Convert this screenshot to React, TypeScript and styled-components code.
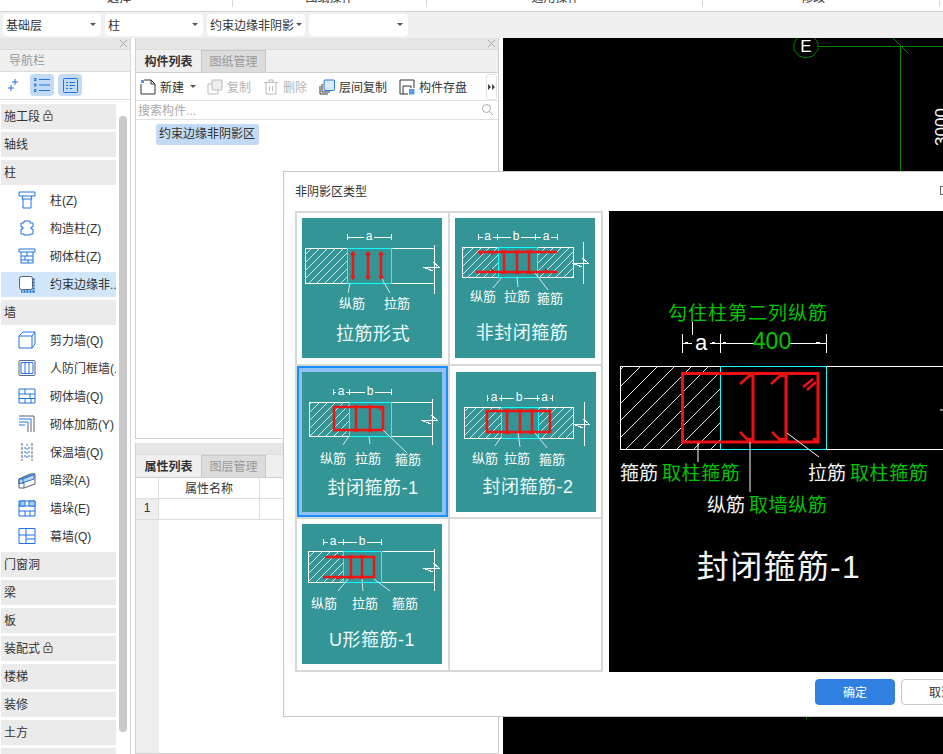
import React from "react";
import styled, { createGlobalStyle } from "styled-components";

const Global = createGlobalStyle`
  html, body { margin: 0; padding: 0; background: #fff; overflow: hidden; }
  body { font-family: "Liberation Sans", "Noto Sans CJK SC", sans-serif; font-size: 12px; color: #333; }
  * { box-sizing: border-box; }
`;

const Page = styled.div`
  position: relative; width: 943px; height: 754px; overflow: hidden;
  display: flex; flex-direction: column; background: #fff;
`;

/* ---------- top ribbon ---------- */
const Ribbon = styled.div`
  height: 12px; flex: none; display: flex; overflow: hidden; background: #fff;
  border-bottom: 1px solid #d4d4d4;
`;
const RibbonGroup = styled.div<{ $w: number; $pl?: number; $pr?: number }>`
  width: ${p => p.$w}px; flex: none; height: 7px; border-right: 1px solid #d8d8d8;
  text-align: center; line-height: 14px; color: #333;
  padding: 0 ${p => p.$pr ?? 0}px 0 ${p => p.$pl ?? 0}px;
  & > span { display: block; margin-top: -9px; }
`;

const SelectBar = styled.div`
  height: 26px; flex: none; background: #f0f0f0; display: flex; align-items: center;
  gap: 4px; padding: 0 0 0 3px;
`;
const Select = styled.div<{ $w: number }>`
  width: ${p => p.$w}px; height: 22px; background: #fff; border-radius: 4px; padding: 0 3px 2px 3px;
  display: flex; align-items: center; justify-content: space-between; white-space: nowrap; color: #333;
`;
const Caret = styled.i`
  flex: none; width: 0; height: 0; border-left: 3px solid transparent; border-right: 3px solid transparent;
  border-top: 3px solid #555; margin: 0 2px;
`;

/* ---------- main ---------- */
const Main = styled.div`flex: 1; display: flex; min-height: 0;`;
const DockHeader = styled.div`
  height: 12px; background: #e6e6e6; border-bottom: 1px solid #dcdcdc; display: flex;
  justify-content: flex-end; align-items: center; padding-right: 3px; flex: none;
`;
const NavPanel = styled.aside`
  position: relative; width: 131px; flex: none; border-right: 1px solid #d8d8d8; display: flex; flex-direction: column; overflow: hidden;
`;
const NavTitle = styled.div`
  height: 22px; flex: none; background: #f0f0f0; border-bottom: 1px solid #dcdcdc; color: #999; padding-left: 9px; line-height: 23px;
`;
const NavTools = styled.div`
  height: 28px; flex: none; border-bottom: 1px solid #dcdcdc; display: flex; align-items: center; padding: 0 0 1px 8px;
  gap: 4px;
`;
const NavSpark = styled.svg`width: 11px; height: 12px; margin-right: 7px; fill: none; stroke: #1e73e0; stroke-width: 1;`;
const NavToolBtn = styled.div`
  width: 24px; height: 22px; background: #c2daf3; border-radius: 4px; display: flex; align-items: center; justify-content: center;
`;
const NavList = styled.div`
  display: flex; flex-direction: column; gap: 3px; padding: 4px 0 0 1px; width: 116px; flex: none;
`;
const Section = styled.div`
  height: 25px; flex: none; background: #ebebeb; padding: 0 0 2px 3px; display: flex; align-items: center; gap: 3px; color: #333;
`;
const Row = styled.div<{ $active?: boolean }>`
  height: 25px; flex: none; display: flex; align-items: center; padding: 0 0 2px 17px; gap: 14px; white-space: nowrap; overflow: hidden;
  background: ${p => (p.$active ? "#d2e6fb" : "transparent")}; color: #333;
`;
const RowIcon = styled.svg`
  width: 18px; height: 18px; flex: none; fill: none; stroke: #1e73e0; stroke-width: 1;
`;
const Thumb = styled.div`
  position: absolute; left: 119px; top: 78px; width: 8px; height: 616px; border-radius: 4px; background: #c9c9c9;
`;

const Middle = styled.div`
  width: 364px; flex: none; margin-left: 4px; display: flex; flex-direction: column; gap: 4px;
`;
const Dock = styled.section<{ $h?: number }>`
  border: solid #d0d0d0; border-width: 0 1px 1px; display: flex; flex-direction: column; overflow: hidden;
  ${p => (p.$h ? `height: ${p.$h}px; flex: none;` : "flex: 1; min-height: 0;")}
`;
const Tabs = styled.div`
  height: 23px; flex: none; background: #f0f0f0; display: flex; border-bottom: 1px solid #d0d0d0;
`;
const Tab = styled.div<{ $on?: boolean }>`
  width: 65px; height: 22px; display: flex; align-items: center; justify-content: center; padding-bottom: 2px;
  background: ${p => (p.$on ? "#f0f0f0" : "#dcdcdc")}; color: ${p => (p.$on ? "#333" : "#999")};
  font-weight: ${p => (p.$on ? 700 : 400)};
  ${p => (p.$on ? "" : "border: 1px solid #c8c8c8; border-bottom: 0;")}
`;
const Tools = styled.div`
  height: 28px; flex: none; display: flex; align-items: center; gap: 12px; padding: 0 0 0 4px; border-bottom: 1px solid #e0e0e0;
`;
const Tool = styled.div<{ $off?: boolean; $tight?: boolean }>`
  display: flex; align-items: center; gap: 4px; white-space: nowrap; color: ${p => (p.$off ? "#b4b4b4" : "#333")};
  ${p => (p.$tight ? "margin-right: -3px;" : "")}
`;
const ToolIcon = styled.svg`width: 16px; height: 16px; flex: none; fill: none; stroke-width: 1;`;
const More = styled.div`
  margin-left: auto; margin-right: 1px; width: 11px; height: 26px; background: #fff; border: 1px solid #e4e4e4; border-radius: 3px;
  display: flex; align-items: center; justify-content: center;
`;
const Search = styled.div`
  height: 19px; flex: none; display: flex; align-items: center; justify-content: space-between; padding: 0 5px 2px 2px; color: #aaa;
  border-bottom: 1px solid #e0e0e0;
`;
const ListBody = styled.div`flex: 1; padding: 4px 0 0 20px;`;
const Picked = styled.div`
  width: 103px; height: 21px; background: #c2daf3; border-radius: 3px; padding-left: 3px; line-height: 21px; white-space: nowrap; color: #333;
`;
const PropHead = styled.div`
  height: 21px; flex: none; display: grid; grid-template-columns: 23px 101px 1fr; border-bottom: 1px solid #ddd;
`;
const PropCell = styled.div<{ $num?: boolean }>`
  display: flex; align-items: center; justify-content: center; padding-bottom: 2px; border-right: 1px solid #ddd; background: ${p => (p.$num ? "#eee" : "#fff")};
`;
const PropFill = styled.div`flex: 1; width: 23px; background: #eee;`;

const Canvas = styled.div`
  width: 440px; flex: none; margin-left: 4px; background: #000; overflow: hidden;
`;
const CanvasArt = styled.svg`display: block; width: 440px; height: 716px;`;

/* ---------- dialog ---------- */
const Dialog = styled.div`
  position: absolute; left: 283px; top: 171px; width: 710px; height: 546px; background: #fff; border: 1px solid #c8c8c8;
  display: flex; flex-direction: column;
`;
const DialogHead = styled.div`
  height: 39px; flex: none; display: flex; align-items: center; justify-content: space-between; padding: 0 44px 2px 11px; color: #333;
`;
const Maximize = styled.i`width: 8px; height: 9px; border: 1px solid #666; display: block;`;
const DialogBody = styled.div`
  height: 461px; flex: none; display: flex; gap: 6px; padding-left: 11px;
`;
const Gallery = styled.div`
  width: 308px; flex: none; border: 2px solid #d8d8d8; background: #d8d8d8; display: grid;
  grid-template-columns: 151px 151px; grid-template-rows: repeat(3, 151px); gap: 2px;
`;
const Cell = styled.div<{ $on?: boolean; $top: number; $left: number }>`
  background: #fff; display: flex; align-items: flex-start; padding: ${p => p.$top}px 0 0 ${p => p.$left}px;
  ${p => (p.$on ? "box-shadow: inset 0 0 0 2px #1890ff, inset 0 0 0 6px #8fc1f6;" : "")}
`;
const CardArt = styled.svg`display: block; width: 140px; height: 140px; background: #339595; flex: none;`;
const CardLabel = styled.text`font-size: 13px; fill: #fff; text-anchor: middle; dominant-baseline: central;`;
const CardTitle = styled.text`font-size: 18px; fill: #eefafa; text-anchor: middle; dominant-baseline: central; letter-spacing: 0.5px;`;
const DimText = styled.text`font-size: 12px; fill: #fff; text-anchor: middle; dominant-baseline: central;`;
const Preview = styled.svg`display: block; width: 372px; height: 461px; background: #000; flex: none;`;
const PreText = styled.text<{ $size: number; $c: string; $mid?: boolean; $sp?: number }>`
  font-size: ${p => p.$size}px; fill: ${p => p.$c}; dominant-baseline: central;
  text-anchor: ${p => (p.$mid ? "middle" : "start")}; letter-spacing: ${p => p.$sp ?? 0}px;
`;
const DialogFoot = styled.div`
  flex: 1; display: flex; justify-content: flex-end; align-items: flex-start; gap: 6px; padding: 7px 11px 0 0;
`;
const Btn = styled.button<{ $primary?: boolean }>`
  width: 80px; height: 26px; border-radius: 4px; font: inherit; cursor: pointer; padding: 0 0 2px;
  background: ${p => (p.$primary ? "#2f80e0" : "#fff")}; color: ${p => (p.$primary ? "#fff" : "#333")};
  border: 1px solid ${p => (p.$primary ? "#2f80e0" : "#c8c8c8")};
`;
const Lock = styled.svg`width: 10px; height: 11px; fill: none; stroke: #555; stroke-width: 1; flex: none;`;

const CloseX = () => (
  <svg width="7" height="7" viewBox="0 0 7 7" fill="none" stroke="#aaa"><path d="M0 0l7 7M7 0L0 7" /></svg>
);
const LockIcon = () => (
  <Lock viewBox="0 0 10 11"><path d="M1 4.500h8v6H1zM3 4.500V2.500a2 2 0 0 1 4 0v2" /><circle cx="5" cy="7.500" r=".8" /></Lock>
);

/* ---------- sidebar icons ---------- */
const D = "#5a6472";
const icons: Record<string, React.ReactNode> = {
  col: <><path d="M1 1h16v4H1zM5 5l-1 3h10l-1-3M5 8v9h8V8" /></>,
  gz: <><path d="M6 2h6v2h3v4h-2v2h2v5h-3v1H6v-1H3v-5h2V8H3V4h3z" /></>,
  qt: <><path d="M1 2h16v3H1zM3 5v11h12V5M3 9h12M3 13h12M9 5v4M7 9v4M10 13v3" /></>,
  ys: <><path d="M15.500 3.500V16.500H3" strokeWidth="2.500" strokeDasharray="2 1" /><rect x="1.500" y="1.500" width="13" height="13" rx="2" fill="#fff" stroke={D} /></>,
  jl: <><path d="M1 5h13v12H1zM1 5l4-4h12v12l-3 4M14 5l3-4" /></>,
  rf: <><rect x="1" y="1.500" width="16" height="15" rx="1" stroke={D} /><path d="M3 3.500h12v11H3zM7 3.500v11M11 3.500v11" /></>,
  qq: <><path d="M1 2h16v14H1zM1 7h16M1 11.500h16M7 2v5M12 7v4.500M7 11.500V16M13 11.500V16" /></>,
  jj: <><path d="M1 4h12v3M1 7h9v3M1 10h6" /><path d="M1 1h15v16M13 7v10M10 10v7" stroke={D} /></>,
  bw: <><path d="M4 0v18M14 0v18" stroke={D} strokeDasharray="3 1" /><path d="M9 1v16M6 5h6M6 9h6M6 13h6" strokeDasharray="2 2" /></>,
  al: <><path d="M1 8l15-5v5L1 13z" fill="#bcd7f6" /><path d="M1 8v9h5l11-4V3l-5 0-11 5M6 17v-5" stroke={D} /><path d="M1 8l4 0 12-5M5 8v5" /></>,
  qd: <><path d="M1 2h16v15H1zM1 7h16M1 12h16M7 12v5M12 12v5" /><path d="M2 2h5v5H2zM11 2h6v5h-6z" fill="#a6ccf7" /></>,
  mq: <><path d="M1 1.500h16v15H1zM1 8h16M8 1.500V16.500M8 12h9" /></>,
};
const NavIcon = ({ k }: { k: string }) => <RowIcon viewBox="0 0 18 18">{icons[k]}</RowIcon>;

/* ---------- gallery cards ---------- */
type CardData = {
  id: string; title: [string, number, number];
  dimY: number; dims: [string, number, number][];
  x1: number; y1: number; y2: number; end: number; closed?: boolean;
  hatch: [number, number][]; cyan: [number, number];
  vx: number; vy: [number, number]; bars: string; hooks: string; leaders: string;
  labels: [string, number, number][];
};

const cards: (CardData | null)[] = [
  {
    id: "c1", title: ["拉筋形式", 71, 116], dimY: 19, dims: [["a", 45, 89]],
    x1: 3, y1: 30, y2: 65, end: 132, hatch: [[3, 45]], cyan: [45, 89], vx: 132, vy: [27, 76],
    bars: "M51 36V59M66 36V59M79 36V59",
    hooks: "M49 37l2-3 2 3M64 37l2-3 2 3M77 37l2-3 2 3M49 58l2 3 2-3M64 58l2 3 2-3M77 58l2 3 2-3",
    leaders: "M48 65L46 75M80 61L88 75",
    labels: [["纵筋", 50, 85], ["拉筋", 95, 85]],
  },
  {
    id: "c2", title: ["非封闭箍筋", 67, 115], dimY: 19, dims: [["a", 23, 42], ["b", 42, 80], ["a", 80, 102]],
    x1: 7, y1: 29, y2: 59, end: 118, closed: true, hatch: [[7, 43], [82, 118]], cyan: [43, 82], vx: 128, vy: [24, 66],
    bars: "M23 34H102M21 54H102M49 34V54M62 34V54M74 34V54",
    hooks: "M25 37l3-3M36 37l3-3M47 32l2 2 2-2M60 32l2 2 2-2M72 32l2 2 2-2M47 56l2-2 2 2M60 56l2-2 2 2M72 56l2-2 2 2M36 51l3 3M90 51l3 3",
    leaders: "M47 59L38 70M62 59L63 69M80 55L93 72",
    labels: [["纵筋", 28, 78], ["拉筋", 62, 78], ["箍筋", 95, 80]],
  },
  {
    id: "c3", title: ["封闭箍筋-1", 71, 116], dimY: 20, dims: [["a", 31, 47], ["b", 47, 89]],
    x1: 7, y1: 30, y2: 64, end: 130, hatch: [[7, 47]], cyan: [47, 89], vx: 130, vy: [27, 73],
    bars: "M32 35H81V58H32ZM54 35V58M68 35V58",
    hooks: "M52 33l2 2 2-2M66 33l2 2 2-2M52 60l2-2 2 2M66 60l2-2 2 2M76 35l3 3",
    leaders: "M47 64L41 73M67 64L68 72M81 58L105 81",
    labels: [["纵筋", 31, 86], ["拉筋", 66, 86], ["箍筋", 106, 87]],
  },
  {
    id: "c4", title: ["封闭箍筋-2", 72, 115], dimY: 26, dims: [["a", 31, 45], ["b", 45, 81], ["a", 81, 96]],
    x1: 8, y1: 35, y2: 66, end: 117, closed: true, hatch: [[8, 45], [82, 117]], cyan: [45, 82], vx: 128, vy: [30, 74],
    bars: "M31 39H94V60H31ZM51 39V60M64 39V60M76 39V60",
    hooks: "M49 37l2 2 2-2M62 37l2 2 2-2M74 37l2 2 2-2M49 62l2-2 2 2M62 62l2-2 2 2M74 62l2-2 2 2",
    leaders: "M45 65L39 74M62 61L64 75M79 61L91 76",
    labels: [["纵筋", 29, 86], ["拉筋", 61, 86], ["箍筋", 96, 87]],
  },
  {
    id: "c5", title: ["U形箍筋-1", 70, 116], dimY: 18, dims: [["a", 21, 41], ["b", 41, 79]],
    x1: 6, y1: 27, y2: 58, end: 132, hatch: [[6, 41]], cyan: [41, 79], vx: 132, vy: [25, 67],
    bars: "M23 33H72V53H21M49 33V53M60 33V53",
    hooks: "M47 31l2 2 2-2M58 31l2 2 2-2M47 55l2-2 2 2M58 55l2-2 2 2M34 31l2 2 2-2M34 55l2-2 2 2",
    leaders: "M46 55L36 67M60 55L61 67M72 55L88 67",
    labels: [["纵筋", 22, 79], ["拉筋", 63, 79], ["箍筋", 103, 79]],
  },
  null,
];

const Card = ({ c }: { c: CardData }) => {
  const my = Math.round((c.y1 + c.y2) / 2);
  return (
    <CardArt viewBox="0 0 140 140">
      <defs>
        <pattern id={c.id} width="8" height="8" patternUnits="userSpaceOnUse">
          <path d="M-1 9L9-1" stroke="#fff" strokeWidth="0.8" />
        </pattern>
      </defs>
      {c.hatch.map(([a, b]) => (
        <rect key={a} x={a} y={c.y1} width={b - a} height={c.y2 - c.y1} fill={`url(#${c.id})`} />
      ))}
      <path
        d={`M${c.end} ${c.y1}H${c.x1}V${c.y2}H${c.end}${c.closed ? "Z" : ""}M${c.vx} ${c.vy[0]}V${c.vy[1]}M${c.vx - 11} ${my + 1}H${c.vx + 5}L${c.vx - 1} ${my - 4}M${c.vx - 1} ${my + 5}L${c.vx - 11} ${my + 1}`}
        fill="none" stroke="#fff" strokeWidth="1" shapeRendering="crispEdges"
      />
      <rect x={c.cyan[0]} y={c.y1} width={c.cyan[1] - c.cyan[0]} height={c.y2 - c.y1} fill="none" stroke="#1ff" strokeWidth="1" shapeRendering="crispEdges" />
      <path d={c.bars} fill="none" stroke="#f01414" strokeWidth="2.500" />
      <path d={c.hooks} fill="none" stroke="#f01414" strokeWidth="1.500" />
      <path d={c.leaders} fill="none" stroke="#fff" strokeWidth="0.8" />
      {c.dims.map(([t, a, b], i) => {
        const m = (a + b) / 2;
        return (
          <g key={i}>
            <path d={`M${a} ${c.dimY - 3}V${c.dimY + 3}M${b} ${c.dimY - 3}V${c.dimY + 3}M${a} ${c.dimY}H${m - 5}M${m + 5} ${c.dimY}H${b}`} stroke="#fff" strokeWidth="1" fill="none" shapeRendering="crispEdges" />
            <DimText x={m} y={c.dimY - 1}>{t}</DimText>
          </g>
        );
      })}
      {c.labels.map(([t, x, y]) => <CardLabel key={t} x={x} y={y}>{t}</CardLabel>)}
      <CardTitle x={c.title[1]} y={c.title[2]}>{c.title[0]}</CardTitle>
    </CardArt>
  );
};

const GREEN = "#00c400";
const WHITE = "#f4f4f4";
const PreviewArt = () => (
  <Preview viewBox="0 0 372 461">
    <defs>
      <pattern id="ph" width="17" height="17" patternUnits="userSpaceOnUse">
        <path d="M-1 18L18-1" stroke="#fff" strokeWidth="0.9" />
      </pattern>
    </defs>
    <PreText x={139} y={102} $size={19} $sp={1} $c={GREEN} $mid>勾住柱第二列纵筋</PreText>
    <path d="M83 111V124M73 123V142M111 123V142M217 123V142M73 132H83M101 132H111M111 132H146M181 132H217" stroke="#fff" strokeWidth="1" fill="none" shapeRendering="crispEdges" />
    <path d="M76 131h3v2h-3zM103 131h3v2h-3zM114 131h3v2h-3zM207 131h4v2h-4z" fill="#fff" />
    <PreText x={92} y={131} $size={22} $c="#fff" $mid>a</PreText>
    <PreText x={163} y={130} $size={23} $c={GREEN} $mid>400</PreText>
    <rect x={11} y={155} width={100} height={83} fill="url(#ph)" />
    <path d="M372 155H11V238H372" fill="none" stroke="#fff" strokeWidth="1" shapeRendering="crispEdges" />
    <rect x={111} y={155} width={106} height={83} fill="none" stroke="#1ff" strokeWidth="1" shapeRendering="crispEdges" />
    <path d="M73.500 162.500H209V231H73.500ZM144 162V231M177 162V231" fill="none" stroke="#f01010" strokeWidth="3" />
    <path d="M131 173l10-9M162 173l10-9M194 176l10-8M198 179l9-8M131 221l9 9M163 221l9 9M204 228l3 2" fill="none" stroke="#f01010" strokeWidth="2.500" />
    <path d="M140 161h5v5h-5zM172 161h5v5h-5zM139 227h6v5h-6zM170 227h8v5h-8zM204 227h6v5h-6z" fill="#f01010" />
    <path d="M89 232V251M141 231V281M178 222L210 246" stroke="#fff" strokeWidth="1" fill="none" />
    <PreText x={11} y={262} $size={19} $c={WHITE}>箍筋</PreText>
    <PreText x={53} y={262} $size={19} $sp={0.6} $c={GREEN}>取柱箍筋</PreText>
    <PreText x={199} y={262} $size={19} $c={WHITE}>拉筋</PreText>
    <PreText x={241} y={262} $size={19} $sp={0.6} $c={GREEN}>取柱箍筋</PreText>
    <PreText x={98} y={294} $size={19} $c={WHITE}>纵筋</PreText>
    <PreText x={140} y={294} $size={19} $sp={0.6} $c={GREEN}>取墙纵筋</PreText>
    <PreText x={170} y={356} $size={32} $sp={1.300} $c={WHITE} $mid>封闭箍筋-1</PreText>
    <path d="M331 199h6" stroke="#fff" strokeWidth="1" />
  </Preview>
);

const tabsFor = (a: string, b: string) => (
  <Tabs><Tab $on>{a}</Tab><Tab>{b}</Tab></Tabs>
);

const sections: { name: string; lock?: boolean; rows?: [string, string, boolean?][] }[] = [
  { name: "施工段", lock: true },
  { name: "轴线" },
  { name: "柱", rows: [["col", "柱(Z)"], ["gz", "构造柱(Z)"], ["qt", "砌体柱(Z)"], ["ys", "约束边缘非..", true]] },
  { name: "墙", rows: [["jl", "剪力墙(Q)"], ["rf", "人防门框墙(."], ["qq", "砌体墙(Q)"], ["jj", "砌体加筋(Y)"], ["bw", "保温墙(Q)"], ["al", "暗梁(A)"], ["qd", "墙垛(E)"], ["mq", "幕墙(Q)"]] },
  { name: "门窗洞" }, { name: "梁" }, { name: "板" }, { name: "装配式", lock: true }, { name: "楼梯" }, { name: "装修" }, { name: "土方" }, { name: "基础" },
];

export default function App() {
  return (
    <Page>
      <Global />
      <Ribbon>
        <RibbonGroup $w={233} $pl={6}><span>选择</span></RibbonGroup>
        <RibbonGroup $w={194}><span>图纸操作</span></RibbonGroup>
        <RibbonGroup $w={276} $pr={18}><span>通用操作</span></RibbonGroup>
        <RibbonGroup $w={237} $pr={16}><span>修改</span></RibbonGroup>
      </Ribbon>
      <SelectBar>
        <Select $w={98}>基础层<Caret /></Select>
        <Select $w={98}>柱<Caret /></Select>
        <Select $w={98}>约束边缘非阴影<Caret /></Select>
        <Select $w={99}><span /><Caret /></Select>
      </SelectBar>
      <Main>
        <NavPanel>
          <DockHeader><CloseX /></DockHeader>
          <NavTitle>导航栏</NavTitle>
          <NavTools>
            <NavSpark viewBox="0 0 11 12"><path d="M7 0v6M4 3h6M3 6v6M0 9h6" /></NavSpark>
            <NavToolBtn>
              <svg width="16" height="14" viewBox="0 0 16 14" fill="none" stroke="#1e73e0"><path d="M5 1.500h11M5 7h11M5 12.500h11M0 .5h2v2H0zM0 6h2v2H0zM0 11.500h2v2H0z" /></svg>
            </NavToolBtn>
            <NavToolBtn>
              <svg width="15" height="15" viewBox="0 0 15 15" fill="none" stroke="#1e73e0"><rect x=".5" y=".5" width="14" height="14" rx="1" /><path d="M3 4.500h2M6.500 4.500H12M3 7.500h2M6.500 7.500H12M3 10.500h2M6.500 10.500h3" /></svg>
            </NavToolBtn>
          </NavTools>
          <NavList>
            {sections.map(s => (
              <React.Fragment key={s.name}>
                <Section>{s.name}{s.lock && <LockIcon />}</Section>
                {s.rows?.map(([k, t, on]) => (
                  <Row key={t} $active={on}><NavIcon k={k} />{t}</Row>
                ))}
              </React.Fragment>
            ))}
          </NavList>
          <Thumb />
        </NavPanel>

        <Middle>
          <Dock $h={401}>
            <DockHeader><CloseX /></DockHeader>
            {tabsFor("构件列表", "图纸管理")}
            <Tools>
              <Tool $tight>
                <ToolIcon viewBox="0 0 16 16" stroke="#333"><path d="M1 5v10h14V5l-4-4H4" /><path d="M1 1h3v3H1z" fill="#5a9be8" stroke="none" /><path d="M11 1v4h4" /></ToolIcon>
                新建<Caret />
              </Tool>
              <Tool $off>
                <ToolIcon viewBox="0 0 16 16" stroke="#bbb"><rect x="5" y="1" width="10" height="10" rx="1" fill="#eee" /><path d="M5 5H1v10h10v-4" /></ToolIcon>
                复制
              </Tool>
              <Tool $off>
                <ToolIcon viewBox="0 0 16 16" stroke="#bbb"><path d="M3 4v11h10V4M1 3.500h14M6 3.500V1h4v2.500M6.500 7v5M9.500 7v5" /></ToolIcon>
                删除
              </Tool>
              <Tool>
                <ToolIcon viewBox="0 0 16 16" stroke="#333"><rect x="5" y="1" width="10.500" height="10.500" rx="1" fill="#dbe9fb" stroke="#1e73e0" /><path d="M3 5v8h8M1 7v8h8" /></ToolIcon>
                层间复制
              </Tool>
              <Tool>
                <ToolIcon viewBox="0 0 16 16" stroke="#333"><path d="M1 1h14v8M1 1v14h8M4 15V7h8v2" /><rect x="10" y="10" width="5.500" height="5.500" fill="#5a9be8" stroke="none" /></ToolIcon>
                构件存盘
              </Tool>
              <More>
                <svg width="7" height="6" viewBox="0 0 7 6" fill="#444"><path d="M0 0l3 3-3 3zM4 0l3 3-3 3z" /></svg>
              </More>
            </Tools>
            <Search>
              搜索构件...
              <svg width="11" height="11" viewBox="0 0 11 11" fill="none" stroke="#aaa"><circle cx="4.500" cy="4.500" r="4" /><path d="M7.500 7.500L11 11" /></svg>
            </Search>
            <ListBody><Picked>约束边缘非阴影区</Picked></ListBody>
          </Dock>
          <Dock>
            <DockHeader />
            {tabsFor("属性列表", "图层管理")}
            <PropHead><PropCell />
              <PropCell>属性名称</PropCell><PropCell /></PropHead>
            <PropHead><PropCell $num>1</PropCell><PropCell /><PropCell /></PropHead>
            <PropFill />
          </Dock>
        </Middle>

        <Canvas>
          <CanvasArt viewBox="0 0 440 716">
            <path d="M315 8H440M397 8V133M390 0L405 15M303 678V681" stroke="#008000" strokeWidth="1" fill="none" shapeRendering="crispEdges" />
            <polygon points="295,-1 311,-1 315,5 315,12 310,18 303,20 296,18 291,12 291,5" fill="none" stroke="#008000" strokeWidth="1" />
            <text x="303" y="14" fill="#fff" fontSize="17" textAnchor="middle" fontFamily="Liberation Sans">E</text>
            <text transform="translate(443.500 89) rotate(-90)" fill="#fff" fontSize="17" textAnchor="middle" fontFamily="Liberation Sans">3000</text>
          </CanvasArt>
        </Canvas>
      </Main>

      <Dialog>
        <DialogHead>非阴影区类型<Maximize /></DialogHead>
        <DialogBody>
          <Gallery>
            {cards.map((c, i) => (
              <Cell key={i} $on={c?.id === "c3"} $top={i === 2 || i === 3 ? 6 : 5} $left={i === 3 ? 6 : 5}>
                {c && <Card c={c} />}
              </Cell>
            ))}
          </Gallery>
          <PreviewArt />
        </DialogBody>
        <DialogFoot>
          <Btn $primary>确定</Btn>
          <Btn>取消</Btn>
        </DialogFoot>
      </Dialog>
    </Page>
  );
}
